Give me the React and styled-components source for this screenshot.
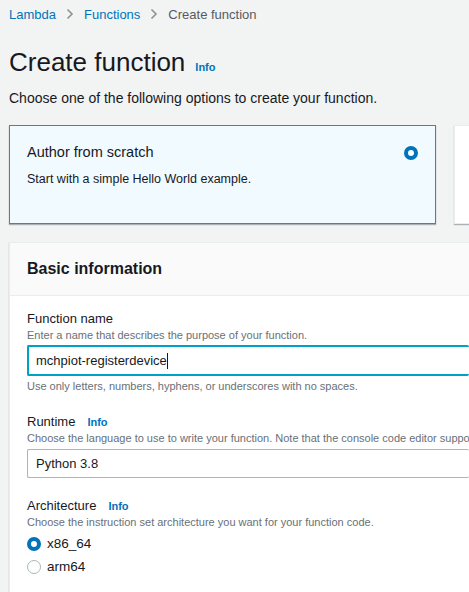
import React from "react";
import styled, { createGlobalStyle } from "styled-components";

const Global = createGlobalStyle`
  html, body { margin: 0; padding: 0; background: #f2f3f3; }
  body { font-family: "Liberation Sans", Arial, sans-serif; color: #16191f; overflow: hidden; }
`;

const Page = styled.div`
  width: 469px;
  height: 592px;
  overflow: hidden;
  padding-left: 9px;
  box-sizing: border-box;
`;

const Crumbs = styled.div`
  display: flex;
  align-items: center;
  gap: 10px;
  height: 28px;
  font-size: 13px;
`;

const Crumb = styled.span`
  color: ${p => (p.current ? "#545b64" : "#0073bb")};
`;

const Chevron = () => (
  <svg width="8" height="12" viewBox="0 0 8 12">
    <path d="M1.5 1.5 L6 6 L1.5 10.5" fill="none" stroke="#879596" strokeWidth="1.6" />
  </svg>
);

const TitleRow = styled.div`
  display: flex;
  align-items: baseline;
  gap: 10px;
  margin-top: 17px;
`;

const Title = styled.h1`
  margin: 0;
  font-size: 26px;
  font-weight: 400;
  line-height: 34px;
`;

const InfoLink = styled.span`
  color: #0073bb;
  font-size: 11px;
  font-weight: 700;
`;

const Lead = styled.p`
  margin: 9px 0 0;
  font-size: 14px;
  line-height: 20px;
`;

const Options = styled.div`
  display: flex;
  gap: 18px;
  margin-top: 17px;
`;

const OptionCard = styled.div`
  flex: 0 0 auto;
  width: ${p => (p.selected ? "427px" : "60px")};
  height: 99px;
  box-sizing: border-box;
  border: 1px solid ${p => (p.selected ? "#00a1c9" : "#eaeded")};
  background: ${p => (p.selected ? "#f1faff" : "#ffffff")};
  box-shadow: 0 1px 1px rgba(0, 28, 36, 0.3);
  padding: 16px 17px 0;
  display: flex;
  justify-content: space-between;
`;

const OptionTitle = styled.div`
  font-size: 14.5px;
  line-height: 20px;
`;

const OptionDesc = styled.div`
  font-size: 12.5px;
  line-height: 18px;
  margin-top: 8px;
`;

const Radio = styled.span`
  flex: 0 0 auto;
  width: 14px;
  height: 14px;
  box-sizing: border-box;
  border-radius: 50%;
  border: ${p => (p.checked ? "4px solid #0073bb" : "1px solid #aab7b8")};
  background: #fff;
  margin-top: ${p => p.top || 0}px;
`;

const Panel = styled.section`
  margin-top: 18px;
  background: #fff;
  border-top: 1px solid #eaeded;
  border-left: 1px solid #eaeded;
  box-shadow: 0 1px 1px rgba(0, 28, 36, 0.3);
`;

const PanelHeader = styled.div`
  background: #fafafa;
  border-bottom: 1px solid #eaeded;
  height: 53px;
  box-sizing: border-box;
  padding: 16px 17px 0;
  font-size: 16px;
  font-weight: 700;
  line-height: 20px;
`;

const PanelBody = styled.div`
  padding: 14px 0 20px 17px;
`;

const Field = styled.div`
  margin-bottom: ${p => p.gap || 20}px;
`;

const Label = styled.div`
  display: flex;
  align-items: baseline;
  gap: 12px;
  font-size: 13px;
  line-height: 18px;
`;

const Desc = styled.div`
  color: #687078;
  font-size: 11px;
  line-height: 16px;
  margin-top: -1px;
  white-space: nowrap;
`;

const Box = styled.div`
  margin-top: ${p => (p.focused ? "2px" : "3px")};
  height: ${p => (p.focused ? "31px" : "29px")};
  box-sizing: border-box;
  border: ${p => (p.focused ? "2px solid #00a1c9" : "1px solid #aab7b8")};
  border-radius: 2px;
  border-right: none;
  background: #fff;
  padding-left: ${p => (p.focused ? "7px" : "8px")};
  display: flex;
  align-items: center;
  font-size: 13px;
`;

const Caret = styled.span`
  display: inline-block;
  width: 1px;
  height: 16px;
  background: #16191f;
`;

const Hint = styled.div`
  color: #687078;
  font-size: 11px;
  line-height: 16px;
  margin-top: 2px;
`;

const RadioList = styled.div`
  display: flex;
  flex-direction: column;
  gap: 8px;
  margin-top: 6px;
`;

const RadioItem = styled.label`
  display: flex;
  align-items: center;
  gap: 6px;
  font-size: 13.5px;
  line-height: 15px;
`;

export default function App() {
  return (
    <Page>
      <Global />
      <Crumbs>
        <Crumb>Lambda</Crumb>
        <Chevron />
        <Crumb>Functions</Crumb>
        <Chevron />
        <Crumb current>Create function</Crumb>
      </Crumbs>
      <TitleRow>
        <Title>Create function</Title>
        <InfoLink>Info</InfoLink>
      </TitleRow>
      <Lead>Choose one of the following options to create your function.</Lead>
      <Options>
        <OptionCard selected>
          <div>
            <OptionTitle>Author from scratch</OptionTitle>
            <OptionDesc>Start with a simple Hello World example.</OptionDesc>
          </div>
          <Radio checked top={4} />
        </OptionCard>
        <OptionCard />
      </Options>
      <Panel>
        <PanelHeader>Basic information</PanelHeader>
        <PanelBody>
          <Field gap={19}>
            <Label>Function name</Label>
            <Desc>Enter a name that describes the purpose of your function.</Desc>
            <Box focused>
              mchpiot-registerdevice<Caret />
            </Box>
            <Hint>Use only letters, numbers, hyphens, or underscores with no spaces.</Hint>
          </Field>
          <Field gap={19}>
            <Label>
              Runtime <InfoLink>Info</InfoLink>
            </Label>
            <Desc>Choose the language to use to write your function. Note that the console code editor supports only Node.js, Python, and Ruby.</Desc>
            <Box>Python 3.8</Box>
          </Field>
          <Field>
            <Label>
              Architecture <InfoLink>Info</InfoLink>
            </Label>
            <Desc>Choose the instruction set architecture you want for your function code.</Desc>
            <RadioList>
              <RadioItem>
                <Radio checked />
                x86_64
              </RadioItem>
              <RadioItem>
                <Radio />
                arm64
              </RadioItem>
            </RadioList>
          </Field>
        </PanelBody>
      </Panel>
    </Page>
  );
}
